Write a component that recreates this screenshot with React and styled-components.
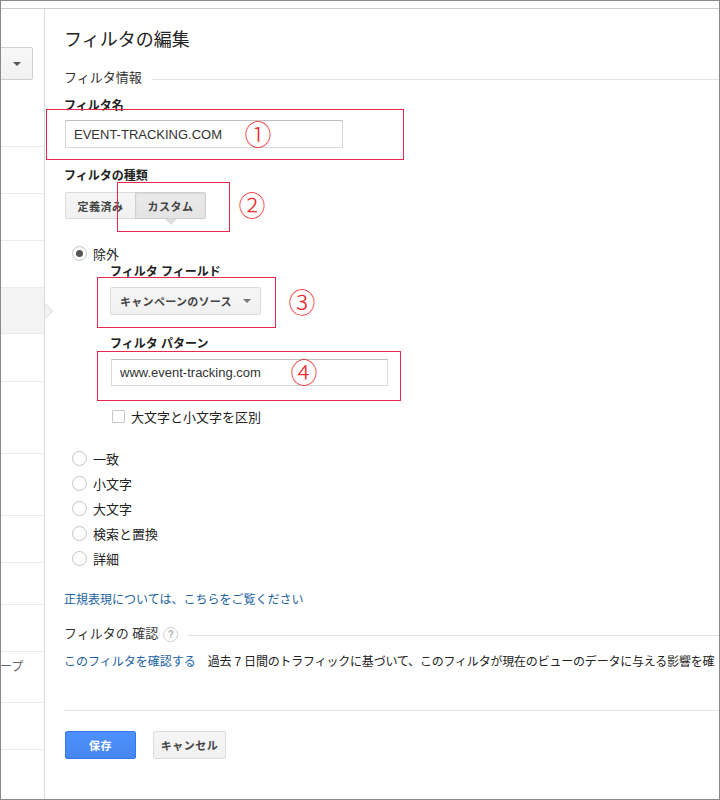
import React from 'react';
import styled, { createGlobalStyle } from 'styled-components';

const Global = createGlobalStyle`
  html, body { margin: 0; padding: 0; background: #fff; }
  body { font-family: "Liberation Sans", "Noto Sans CJK JP", sans-serif; color: #222; }
  * { box-sizing: border-box; }
`;

const Frame = styled.div`
  width: 720px;
  height: 800px;
  border: 1px solid #8a8a8a;
  display: flex;
  flex-direction: column;
  overflow: hidden;
  background: #fff;
`;

const TopStrip = styled.div`
  flex: none;
  height: 8px;
  border-bottom: 1px solid #cbcbcb;
`;

const Body = styled.div`
  flex: 1;
  display: flex;
  min-height: 0;
`;

const Sidebar = styled.div`
  flex: none;
  width: 44px;
  border-right: 1px solid #dadada;
  display: flex;
  flex-direction: column;
`;

const SideTop = styled.div`
  height: 138px;
  padding-top: 38px;
  border-bottom: 1px solid #ebebeb;
`;

const SideSelect = styled.div`
  margin-left: -10px;
  width: 42px;
  height: 33px;
  border: 1px solid #cfcfcf;
  border-radius: 2px;
  background: linear-gradient(#f8f8f8, #f1f1f1);
  display: flex;
  align-items: center;
  justify-content: flex-end;
  padding-right: 11px;
`;

const Caret = styled.span`
  width: 0;
  height: 0;
  border-left: 4px solid transparent;
  border-right: 4px solid transparent;
  border-top: 4px solid ${p => p.$color || '#666'};
`;

const SideRow = styled.div`
  position: relative;
  flex: none;
  height: ${p => p.$h}px;
  border-bottom: 1px solid #ebebeb;
  background: ${p => (p.$active ? '#f3f3f3' : '#fff')};
  font-size: 12px;
  color: #666;
  line-height: 16px;
  padding-top: 7px;
  white-space: nowrap;

  ${p =>
    p.$active &&
    `
    &::before {
      content: '';
      position: absolute;
      right: -9px;
      top: 50%;
      margin-top: -8px;
      border-top: 8px solid transparent;
      border-bottom: 8px solid transparent;
      border-left: 8px solid #d6d6d6;
      z-index: 3;
    }
    &::after {
      content: '';
      position: absolute;
      right: -8px;
      top: 50%;
      margin-top: -7px;
      border-top: 7px solid transparent;
      border-bottom: 7px solid transparent;
      border-left: 7px solid #f3f3f3;
      z-index: 4;
    }
  `}
`;

const SideText = styled.span`
  display: inline-block;
  margin-left: -1px;
`;

const Main = styled.div`
  position: relative;
  flex: 1;
  min-width: 0;
  padding-left: 19px;
  display: flex;
  flex-direction: column;
  overflow: hidden;
`;

const Title = styled.h1`
  margin: 19px 0 0;
  font-size: 18px;
  line-height: 24px;
  font-weight: 400;
  color: #222;
`;

const SectionHeader = styled.div`
  margin-top: ${p => p.$mt}px;
  display: flex;
  align-items: flex-start;
  font-size: 13px;
  line-height: 16px;
  color: #333;
  white-space: nowrap;

  &::after {
    content: '';
    flex: 1;
    height: 1px;
    margin-top: 9px;
    margin-left: 10px;
    background: #e3e3e3;
  }
`;

const HelpIcon = styled.span`
  margin-left: 5px;
  width: 15px;
  height: 15px;
  border: 1px solid #d0d0d0;
  border-radius: 50%;
  display: inline-flex;
  align-items: center;
  justify-content: center;
  font-size: 10px;
  font-weight: 700;
  color: #b0b0b0;
  line-height: 1;
  margin-top: 1px;
`;

const FieldLabel = styled.div`
  margin-top: ${p => p.$mt}px;
  font-size: 12px;
  line-height: 16px;
  font-weight: 700;
  color: #222;
  white-space: nowrap;
`;

const TextField = styled.div`
  margin-top: ${p => p.$mt}px;
  margin-left: 1px;
  width: ${p => p.$w}px;
  height: ${p => p.$h}px;
  border: 1px solid #d9d9d9;
  border-top-color: #c0c0c0;
  background: #fff;
  padding-left: 8px;
  display: flex;
  align-items: center;
  font-family: "Liberation Sans", Arial, sans-serif;
  font-size: 13px;
  color: #333;
`;

const Segmented = styled.div`
  margin-top: 8px;
  margin-left: 1px;
  display: flex;
`;

const SegButton = styled.div`
  position: relative;
  width: 71px;
  height: 27px;
  display: flex;
  align-items: center;
  justify-content: center;
  font-size: 11px;
  font-weight: 700;
  color: #444;
  border: 1px solid ${p => (p.$active ? '#cfcfcf' : '#dcdcdc')};
  background: ${p => (p.$active ? 'linear-gradient(#eaeaea, #e4e4e4)' : 'linear-gradient(#f5f5f5, #f1f1f1)')};
  box-shadow: ${p => (p.$active ? 'inset 0 1px 2px rgba(0,0,0,0.08)' : 'none')};
  border-radius: ${p => (p.$first ? '2px 0 0 2px' : '0 2px 2px 0')};
  margin-left: ${p => (p.$first ? '0' : '-1px')};
  letter-spacing: 0.5px;

  ${p =>
    p.$active &&
    `
    &::after {
      content: '';
      position: absolute;
      left: 50%;
      bottom: -7px;
      margin-left: -6px;
      border-left: 6px solid transparent;
      border-right: 6px solid transparent;
      border-top: 6px solid #dedede;
    }
  `}
`;

const OptionRow = styled.div`
  margin-top: ${p => p.$mt}px;
  margin-left: ${p => p.$ml || 8}px;
  height: 18px;
  display: flex;
  align-items: center;
  gap: ${p => p.$gap || 6}px;
  font-size: 13px;
  color: #222;
  white-space: nowrap;
`;

const Radio = styled.span`
  flex: none;
  position: relative;
  width: 15px;
  height: 15px;
  border: 1px solid #c4c4c4;
  border-radius: 50%;
  background: #fff;

  ${p =>
    p.$checked &&
    `
    &::after {
      content: '';
      position: absolute;
      left: 3px;
      top: 3px;
      width: 7px;
      height: 7px;
      border-radius: 50%;
      background: #555;
    }
  `}
`;

const Checkbox = styled.span`
  flex: none;
  width: 13px;
  height: 13px;
  border: 1px solid #c6c6c6;
  border-radius: 1px;
  background: #fff;
`;

const Nested = styled.div`
  margin-left: 46px;
  display: flex;
  flex-direction: column;
`;

const SelectButton = styled.div`
  margin-top: 7px;
  width: 151px;
  height: 28px;
  border: 1px solid #dcdcdc;
  border-radius: 2px;
  background: linear-gradient(#f5f5f5, #f1f1f1);
  display: flex;
  align-items: center;
  justify-content: space-between;
  padding: 0 9px 0 9px;
  font-size: 11px;
  font-weight: 700;
  color: #444;
  letter-spacing: 0.3px;
`;

const RadioList = styled.div`
  margin-top: 24px;
  display: flex;
  flex-direction: column;
  gap: 7px;
`;

const Link = styled.a`
  color: #1a62a3;
  text-decoration: none;
  font-size: 12px;
  line-height: 16px;
  cursor: pointer;
  white-space: nowrap;
`;

const LinkLine = styled.div`
  margin-top: 25px;
  display: flex;
`;

const PreviewRow = styled.div`
  margin-top: 12px;
  display: flex;
  gap: 12px;
  font-size: 12px;
  line-height: 16px;
  white-space: nowrap;
  color: #222;
`;

const PreviewText = styled.span`
  letter-spacing: -0.2px;
`;

const Separator = styled.div`
  margin-top: 40px;
  height: 1px;
  background: #e3e3e3;
`;

const Buttons = styled.div`
  margin-top: 20px;
  margin-left: 1px;
  display: flex;
  gap: 17px;
`;

const Button = styled.div`
  width: ${p => p.$w}px;
  height: 28px;
  border-radius: 2px;
  display: flex;
  align-items: center;
  justify-content: center;
  font-size: 11px;
  font-weight: 700;
  letter-spacing: 0.5px;
  color: ${p => (p.$primary ? '#fff' : '#444')};
  background: ${p => (p.$primary ? 'linear-gradient(#4d90fe, #4787ed)' : 'linear-gradient(#f5f5f5, #f1f1f1)')};
  border: 1px solid ${p => (p.$primary ? '#3079ed' : '#dcdcdc')};
`;

const AnnotBox = styled.div`
  position: absolute;
  left: ${p => p.$x}px;
  top: ${p => p.$y}px;
  width: ${p => p.$w}px;
  height: ${p => p.$h}px;
  border: 1px solid #e8274d;
  pointer-events: none;
`;

const AnnotNum = styled.span`
  position: absolute;
  left: ${p => p.$x}px;
  top: ${p => p.$y}px;
  width: 28px;
  height: 28px;
  display: flex;
  align-items: center;
  justify-content: center;
  font-family: "Noto Sans CJK JP", sans-serif;
  font-weight: 300;
  font-size: 27px;
  line-height: 28px;
  color: #f0282d;
`;

const sideRows = [
  { h: 47 },
  { h: 47 },
  { h: 47 },
  { h: 46, active: true },
  { h: 48 },
  { h: 72 },
  { h: 62 },
  { h: 47 },
  { h: 42 },
  { h: 47 },
  { h: 51, text: 'ープ' },
  { h: 47 },
];

const annotations = [
  { box: [1, 100, 358, 51], num: '①', at: [199, 111] },
  { box: [72, 173, 113, 50], num: '②', at: [193, 182] },
  { box: [52, 268, 179, 51], num: '③', at: [243, 279] },
  { box: [52, 342, 304, 50], num: '④', at: [245, 349] },
];

const otherRadios = ['一致', '小文字', '大文字', '検索と置換', '詳細'];

export default function App() {
  return (
    <>
      <Global />
      <Frame>
        <TopStrip />
        <Body>
          <Sidebar>
            <SideTop>
              <SideSelect>
                <Caret $color="#555" />
              </SideSelect>
            </SideTop>
            {sideRows.map((r, i) => (
              <SideRow key={i} $h={r.h} $active={r.active}>
                {r.text && <SideText>{r.text}</SideText>}
              </SideRow>
            ))}
          </Sidebar>

          <Main>
            <Title>フィルタの編集</Title>
            <SectionHeader $mt={18}>フィルタ情報</SectionHeader>

            <FieldLabel $mt={12}>フィルタ名</FieldLabel>
            <TextField $mt={6} $w={278} $h={28}>EVENT-TRACKING.COM</TextField>

            <FieldLabel $mt={20}>フィルタの種類</FieldLabel>
            <Segmented>
              <SegButton $first>定義済み</SegButton>
              <SegButton $active>カスタム</SegButton>
            </Segmented>

            <OptionRow $mt={25}>
              <Radio $checked />
              <span>除外</span>
            </OptionRow>

            <Nested>
              <FieldLabel $mt={2}>フィルタ フィールド</FieldLabel>
              <SelectButton>
                <span>キャンペーンのソース</span>
                <Caret $color="#777" />
              </SelectButton>

              <FieldLabel $mt={21}>フィルタ パターン</FieldLabel>
              <TextField $mt={7} $w={277} $h={27}>www.event-tracking.com</TextField>

              <OptionRow $mt={21} $ml={2} $gap={6}>
                <Checkbox />
                <span>大文字と小文字を区別</span>
              </OptionRow>
            </Nested>

            <RadioList>
              {otherRadios.map(t => (
                <OptionRow key={t} $mt={0}>
                  <Radio />
                  <span>{t}</span>
                </OptionRow>
              ))}
            </RadioList>

            <LinkLine>
              <Link>正規表現については、こちらをご覧ください</Link>
            </LinkLine>

            <SectionHeader $mt={18}>
              フィルタの 確認
              <HelpIcon>?</HelpIcon>
            </SectionHeader>

            <PreviewRow>
              <Link>このフィルタを確認する</Link>
              <PreviewText>過去 7 日間のトラフィックに基づいて、このフィルタが現在のビューのデータに与える影響を確</PreviewText>
            </PreviewRow>

            <Separator />

            <Buttons>
              <Button $primary $w={71}>保存</Button>
              <Button $w={73}>キャンセル</Button>
            </Buttons>

            {annotations.map(a => (
              <React.Fragment key={a.num}>
                <AnnotBox $x={a.box[0]} $y={a.box[1]} $w={a.box[2]} $h={a.box[3]} />
                <AnnotNum $x={a.at[0]} $y={a.at[1]}>{a.num}</AnnotNum>
              </React.Fragment>
            ))}
          </Main>
        </Body>
      </Frame>
    </>
  );
}
